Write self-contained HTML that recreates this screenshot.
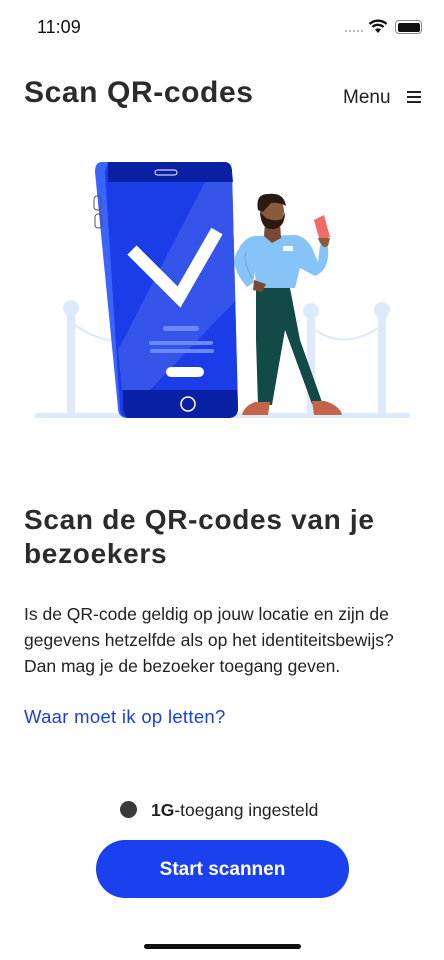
<!DOCTYPE html>
<html><head><meta charset="utf-8"><style>
*{margin:0;padding:0;box-sizing:border-box}
body{width:444px;height:960px;background:#fff;font-family:"Liberation Sans",sans-serif;color:#222;position:relative;overflow:hidden}
.abs{position:absolute}
</style></head><body>
<div class="abs" style="left:37px;top:17px;font-size:18px;color:#111">11:09</div>
<div class="abs" style="left:345px;top:30px;width:18px;height:2px;border-top:2px dotted #bbb"></div>
<svg class="abs" style="left:368px;top:19px" width="20" height="15" viewBox="0 0 20 15"><path d="M10 14 L13 10.5 A4.5 4.5 0 0 0 7 10.5Z" fill="#111"/><path d="M4.5 8 A8 8 0 0 1 15.5 8" stroke="#111" stroke-width="2.4" fill="none"/><path d="M1.5 5 A12.5 12.5 0 0 1 18.5 5" stroke="#111" stroke-width="2.4" fill="none"/></svg>
<div class="abs" style="left:395px;top:20px;width:27px;height:14px;border:1.5px solid #888;border-radius:4px;padding:1.5px"><div style="width:100%;height:100%;background:#111;border-radius:2px"></div></div>
<div class="abs" style="left:24px;top:76px;font-size:30px;font-weight:bold;color:#2b2b2b;letter-spacing:0.6px">Scan QR-codes</div>
<div class="abs" style="left:343px;top:87px;font-size:19px;color:#222">Menu</div>
<div class="abs" style="left:407px;top:91px;width:14px;height:12px;border-top:2px solid #222;border-bottom:2px solid #222"><div style="margin-top:3px;height:2px;background:#222"></div></div>

<svg class="abs" style="left:0;top:150px" width="444" height="280" viewBox="0 150 444 280">
<g fill="#dceafb" stroke="none">
<rect x="35" y="413" width="375" height="5" rx="2"/>
<circle cx="71" cy="308" r="8"/><rect x="67" y="308" width="8" height="105"/>
<circle cx="311" cy="311" r="8"/><rect x="307" y="311" width="8" height="102"/>
<circle cx="382" cy="310" r="8"/><rect x="378" y="310" width="8" height="103"/>
</g>
<path d="M75 325 Q110 350 140 335" stroke="#dceafb" stroke-width="2" fill="none"/>
<path d="M315 330 Q345 350 378 328" stroke="#dceafb" stroke-width="2" fill="none"/>
<path d="M102 162 L224 162 Q232 162 232 172 L238 408 Q238 418 228 418 L128 418 Q118 418 118 408 L95 172 Q95 162 102 162Z" fill="#3b63ff"/>
<path d="M108 162 L224 162 Q232 162 232 172 L238 408 Q238 418 228 418 L130 418 Q120 418 120 408 L105 172Z" fill="#1a3de8"/>
<path d="M108 162 L224 162 Q232 162 232 172 L233 182 L108 182Z" fill="#0a21a6"/>
<path d="M123 390 L237 390 L238 408 Q238 418 228 418 L130 418 Q124 418 123 408Z" fill="#0a21a6"/>
<path d="M205 182 L233 182 L236 300 L150 390 L122 390 L118 350Z" fill="#ffffff" opacity="0.12"/>
<rect x="155" y="170" width="22" height="5" rx="2.5" fill="none" stroke="#fff" stroke-width="1"/>
<circle cx="188" cy="404" r="7" fill="none" stroke="#fff" stroke-width="1.5"/>
<path d="M132 250 L179 297 L217 231" stroke="#fff" stroke-width="13" fill="none" stroke-linejoin="miter"/>
<rect x="163" y="326" width="36" height="5" rx="2.5" fill="#6a88ff"/>
<rect x="149" y="341" width="64" height="4" rx="2" fill="#6a88ff"/>
<rect x="150" y="349" width="64" height="4" rx="2" fill="#6a88ff"/>
<rect x="166" y="367" width="38" height="10" rx="5" fill="#fff"/>
<rect x="94" y="196" width="7" height="14" rx="3" fill="none" stroke="#555" stroke-width="1"/>
<rect x="95" y="214" width="7" height="14" rx="3" fill="none" stroke="#555" stroke-width="1"/>
<path d="M256 288 L290 288 L300 340 L322 402 L312 404 L285 330 L272 405 L258 405 L256 340Z" fill="#124a48"/>
<path d="M255 402 L270 402 L268 415 L242 415 Q244 406 255 402Z" fill="#c4654a"/>
<path d="M312 401 L325 401 Q340 406 342 415 L314 415Z" fill="#c4654a"/>
<path d="M254 236 L296 235 Q306 237 312 248 L318 262 L320 245 L328 247 Q330 270 315 276 L300 268 L295 288 L256 288 L255 272 L253 283 L247 287 Q228 265 238 250 Q244 238 254 236Z" fill="#86c4f7"/>
<path d="M246 252 Q243 262 252 278" stroke="#6aa8e0" stroke-width="1" fill="none"/>
<rect x="283" y="246" width="10" height="5" fill="#fff"/>
<path d="M265 222 L280 222 L281 238 L272 243 L264 236Z" fill="#7a4a34"/>
<ellipse cx="272" cy="211" rx="12" ry="14" fill="#8a5a3c"/>
<path d="M260 212 Q261 230 273 229 Q285 228 285 212 L282 219 Q275 222 266 218Z" fill="#2a1a12"/>
<path d="M258 210 Q255 194 268 194 Q284 192 286 206 Q279 202 271 203 L263 212Z" fill="#2a1a12"/>
<path d="M314 220 L324 215 L330 237 L320 241Z" fill="#f06a6a"/>
<path d="M318 238 Q322 250 328 246 L330 238Z" fill="#8a5a3c"/>
<path d="M254 280 L266 284 L262 292 L253 290Z" fill="#7a4a34"/>
</svg>

<div class="abs" style="left:24px;top:503px;width:420px;font-size:28px;font-weight:bold;line-height:34px;color:#2b2b2b;letter-spacing:0.7px">Scan de QR-codes van je<br>bezoekers</div>
<div class="abs" style="left:24px;top:601px;width:420px;font-size:17.5px;line-height:26px;color:#222;white-space:nowrap">Is de QR-code geldig op jouw locatie en zijn de<br>gegevens hetzelfde als op het identiteitsbewijs?<br>Dan mag je de bezoeker toegang geven.</div>
<div class="abs" style="left:24px;top:706px;font-size:18.5px;color:#1a3de8;letter-spacing:0.3px">Waar moet ik op letten?</div>
<div class="abs" style="left:120px;top:801px;width:17px;height:17px;border-radius:50%;background:#3a3a3a"></div>
<div class="abs" style="left:151px;top:800px;font-size:17.5px;color:#222"><b>1G</b>-toegang ingesteld</div>
<div class="abs" style="left:96px;top:840px;width:253px;height:58px;border-radius:29px;background:#1b40ee;color:#fff;font-size:19px;font-weight:bold;text-align:center;line-height:60px">Start scannen</div>
<div class="abs" style="left:144px;top:944px;width:157px;height:5px;border-radius:3px;background:#111"></div>
</body></html>
